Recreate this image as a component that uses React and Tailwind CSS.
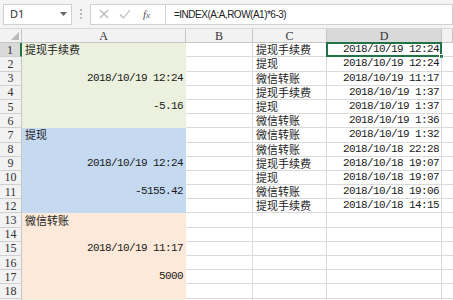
const CJK = { fontFamily: '"Noto Sans CJK SC", sans-serif' }

const colA = {
  1: '提现手续费', 3: '2018/10/19 12:24', 5: '-5.16',
  7: '提现', 9: '2018/10/19 12:24', 11: '-5155.42',
  13: '微信转账', 15: '2018/10/19 11:17', 17: '5000',
  19: '提现手续费',
}

const colCD = [
  ['提现手续费', '2018/10/19 12:24'],
  ['提现', '2018/10/19 12:24'],
  ['微信转账', '2018/10/19 11:17'],
  ['提现手续费', '2018/10/19 1:37'],
  ['提现', '2018/10/19 1:37'],
  ['微信转账', '2018/10/19 1:36'],
  ['微信转账', '2018/10/19 1:32'],
  ['微信转账', '2018/10/18 22:28'],
  ['提现手续费', '2018/10/18 19:07'],
  ['提现', '2018/10/18 19:07'],
  ['微信转账', '2018/10/18 19:06'],
  ['提现手续费', '2018/10/18 14:15'],
]

function fillFor(r) {
  const block = Math.floor((r - 1) / 6) % 3
  if (block === 0) return 'bg-[#ebf1de] border-[#ebf1de]'
  if (block === 1) return 'bg-[#c5d9f1] border-[#c5d9f1]'
  return 'bg-[#fde9d9] border-[#fde9d9]'
}

function CellText({ text }) {
  if (!text) return null
  const ascii = /^[\x00-\x7f]+$/.test(text)
  if (ascii) {
    return (
      <span className="ml-auto pr-[2px] text-[11px] leading-none tracking-[-0.6px] text-[#1a1a1a] whitespace-nowrap"
        style={{ fontFamily: '"Liberation Mono", monospace' }}>
        {text}
      </span>
    )
  }
  return <span className="pl-[3px] text-[11px] text-[#222] whitespace-nowrap leading-none" style={CJK}>{text}</span>
}

function Toolbar() {
  return (
    <div className="flex items-center h-[29px] bg-[#f4f4f4] border-b border-[#dadada] pl-[3px]">
      <div className="flex items-center w-[69px] h-[21px] bg-white border border-[#d0d0d0] pl-[6px] pr-[4px]">
        <span className="text-[11px] text-[#333]" style={{ fontFamily: '"Noto Sans", sans-serif' }}>D1</span>
        <svg className="ml-auto" width="7" height="4" viewBox="0 0 7 4"><path d="M0 0h7L3.5 4z" fill="#666" /></svg>
      </div>
      <div className="flex flex-col gap-[2px] mx-[8px]">
        <span className="w-[2px] h-[2px] bg-[#b8b8b8]" />
        <span className="w-[2px] h-[2px] bg-[#b8b8b8]" />
        <span className="w-[2px] h-[2px] bg-[#b8b8b8]" />
      </div>
      <div className="flex items-center h-[21px] w-[76px] bg-white border border-[#d0d0d0] pl-[8px] gap-[10px]">
        <svg width="10" height="10" viewBox="0 0 10 10"><path d="M1 1l8 8M9 1l-8 8" stroke="#b5b5b5" strokeWidth="1.1" /></svg>
        <svg width="12" height="10" viewBox="0 0 12 10"><path d="M1 5.5l3.5 3.5L11 1" stroke="#b5b5b5" strokeWidth="1.1" fill="none" /></svg>
        <span className="ml-[2px] text-[11px] italic text-[#555]" style={{ fontFamily: '"Liberation Serif", serif' }}>
          f<span className="text-[9px]">x</span>
        </span>
      </div>
      <div className="flex items-center flex-1 h-[21px] bg-white border border-l-0 border-[#d0d0d0] pl-[8px]">
        <span className="text-[10px] tracking-[-0.5px] text-[#222]" style={{ fontFamily: '"Liberation Sans", sans-serif' }}>
          =INDEX(A:A,ROW(A1)*6-3)
        </span>
      </div>
    </div>
  )
}

export default function App() {
  const rows = Array.from({ length: 19 }, (_, i) => i + 1)
  const hdrFont = { fontFamily: '"Liberation Serif", serif' }

  return (
    <div className="w-[453px] h-[300px] overflow-hidden bg-white">
      <Toolbar />
      <div className="grid grid-cols-[22px_164px_67px_74px_115px_1fr] auto-rows-[14.2px]">
        {/* header row */}
        <div className="relative h-[14px] bg-[#f2f2f2] border-r border-b border-[#c6c6c6]">
          <svg className="absolute right-[2px] bottom-[2px]" width="8" height="8" viewBox="0 0 8 8"><path d="M8 0v8H0z" fill="#b9b9b9" /></svg>
        </div>
        {['A', 'B', 'C', 'D', ''].map(l => (
          <div key={l || 'E'}
            className={`h-[14px] flex items-center justify-center text-[12px] leading-none text-[#333] border-r border-b border-[#c6c6c6] ${l === 'D' ? 'bg-[#d9d9d9]' : 'bg-[#f2f2f2]'}`}
            style={hdrFont}>
            {l}
          </div>
        ))}

        {rows.map(r => {
          const cd = colCD[r - 1]
          return [
            <div key={`h${r}`}
              className={`flex items-center justify-center text-[12px] leading-none text-[#333] border-b border-[#d0d0d0] ${r === 1 ? 'bg-[#d9d9d9] border-r-2 border-r-[#217346]' : 'bg-[#f2f2f2] border-r border-r-[#c6c6c6]'}`}
              style={hdrFont}>
              {r}
            </div>,
            <div key={`a${r}`} className={`flex items-center border-r border-b ${fillFor(r)}`}>
              <CellText text={colA[r]} />
            </div>,
            <div key={`b${r}`} className="border-r border-b border-[#dadada]" />,
            <div key={`c${r}`} className="flex items-center border-r border-b border-[#dadada]">
              <CellText text={cd && cd[0]} />
            </div>,
            <div key={`d${r}`} className="relative flex items-center border-r border-b border-[#dadada]">
              <CellText text={cd && cd[1]} />
              {r === 1 && (
                <>
                  <div className="absolute left-[-1px] top-[-1px] right-[-1px] bottom-[-1px] border-2 border-[#217346]" />
                  <div className="absolute right-[-3px] bottom-[-3px] w-[5px] h-[5px] bg-[#217346] border border-white" />
                </>
              )}
            </div>,
            <div key={`e${r}`} className="border-b border-[#dadada]" />,
          ]
        })}
      </div>
    </div>
  )
}
